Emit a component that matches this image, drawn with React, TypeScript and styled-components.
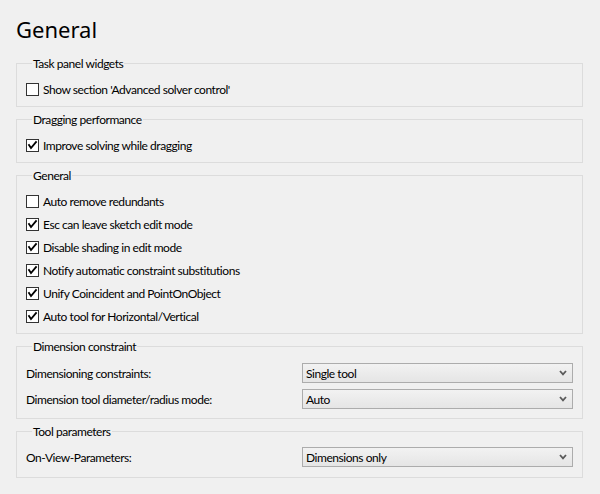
import React from "react";
import styled, { createGlobalStyle } from "styled-components";

const Global = createGlobalStyle`
  html, body { margin: 0; padding: 0; background: #f0f0f0; }
  body {
    font-family: "Lato", "Noto Sans", sans-serif;
    font-size: 12px;
    letter-spacing: -0.45px;
    font-variant-ligatures: none;
    color: #000;
  }
`;

const Page = styled.div`
  width: 600px;
  height: 494px;
  box-sizing: border-box;
  padding: 0 17px 0 16px;
  display: flex;
  flex-direction: column;
  gap: 5px;
  overflow: hidden;
`;

const Title = styled.h1`
  margin: 0;
  padding: 14px 0 6px 0;
  font-family: "Noto Sans", sans-serif;
  font-weight: 400;
  font-size: 22px;
  letter-spacing: 0;
  line-height: 31px;
  height: 31px;
`;

const Group = styled.fieldset<{ $pt?: number; $pb?: number }>`
  margin: 0;
  border: 1px solid #dcdcdc;
  padding: ${(p) => p.$pt ?? 7}px 9px ${(p) => p.$pb ?? 5}px 9px;
  min-width: 0;
  display: flex;
  flex-direction: column;
`;

const Legend = styled.legend`
  padding: 0 1px;
  margin-left: 6px;
  font-size: 12px;
  line-height: 15px;
`;

const CheckRow = styled.label`
  display: flex;
  align-items: center;
  gap: 4px;
  height: 23px;
  line-height: 23px;
`;

const Box = styled.span`
  width: 13px;
  height: 13px;
  box-sizing: border-box;
  border: 1px solid #333;
  background: #fff;
  display: inline-flex;
  align-items: center;
  justify-content: center;
  flex: none;
`;

const FieldRow = styled.div<{ $mt?: number }>`
  display: flex;
  align-items: center;
  justify-content: space-between;
  height: 20px;
  margin-top: ${(p) => p.$mt ?? 0}px;
`;

const FieldLabel = styled.span`
  padding-left: 0;
`;

const Combo = styled.div`
  width: 271px;
  height: 20px;
  box-sizing: border-box;
  border: 1px solid #acacac;
  background: linear-gradient(#f2f2f2, #e5e5e5);
  display: flex;
  align-items: center;
  justify-content: space-between;
  padding: 0 5px 0 3px;
  font-size: 12px;
`;

function Check({ checked, label }: { checked: boolean; label: string }) {
  return (
    <CheckRow>
      <Box>
        {checked && (
          <svg width="11" height="11" viewBox="0 0 11 11">
            <polyline points="2,5 4,8 9,2" fill="none" stroke="#000" strokeWidth="1.8" strokeLinecap="square" />
          </svg>
        )}
      </Box>
      <span>{label}</span>
    </CheckRow>
  );
}

function Select({ value }: { value: string }) {
  return (
    <Combo>
      <span>{value}</span>
      <svg width="8" height="6" viewBox="0 0 8 6">
        <polyline points="1,1 4,4.3 7,1" fill="none" stroke="#5a5a5a" strokeWidth="1.8" />
      </svg>
    </Combo>
  );
}

export default function App() {
  return (
    <>
      <Global />
      <Page>
        <Title>General</Title>
        <Group>
          <Legend>Task panel widgets</Legend>
          <Check checked={false} label="Show section 'Advanced solver control'" />
        </Group>
        <Group>
          <Legend>Dragging performance</Legend>
          <Check checked label="Improve solving while dragging" />
        </Group>
        <Group>
          <Legend>General</Legend>
          <Check checked={false} label="Auto remove redundants" />
          <Check checked label="Esc can leave sketch edit mode" />
          <Check checked label="Disable shading in edit mode" />
          <Check checked label="Notify automatic constraint substitutions" />
          <Check checked label="Unify Coincident and PointOnObject" />
          <Check checked label="Auto tool for Horizontal/Vertical" />
        </Group>
        <Group $pt={9} $pb={9}>
          <Legend>Dimension constraint</Legend>
          <FieldRow>
            <FieldLabel>Dimensioning constraints:</FieldLabel>
            <Select value="Single tool" />
          </FieldRow>
          <FieldRow $mt={6}>
            <FieldLabel>Dimension tool diameter/radius mode:</FieldLabel>
            <Select value="Auto" />
          </FieldRow>
        </Group>
        <Group $pt={8} $pb={10}>
          <Legend>Tool parameters</Legend>
          <FieldRow>
            <FieldLabel>On-View-Parameters:</FieldLabel>
            <Select value="Dimensions only" />
          </FieldRow>
        </Group>
      </Page>
    </>
  );
}
